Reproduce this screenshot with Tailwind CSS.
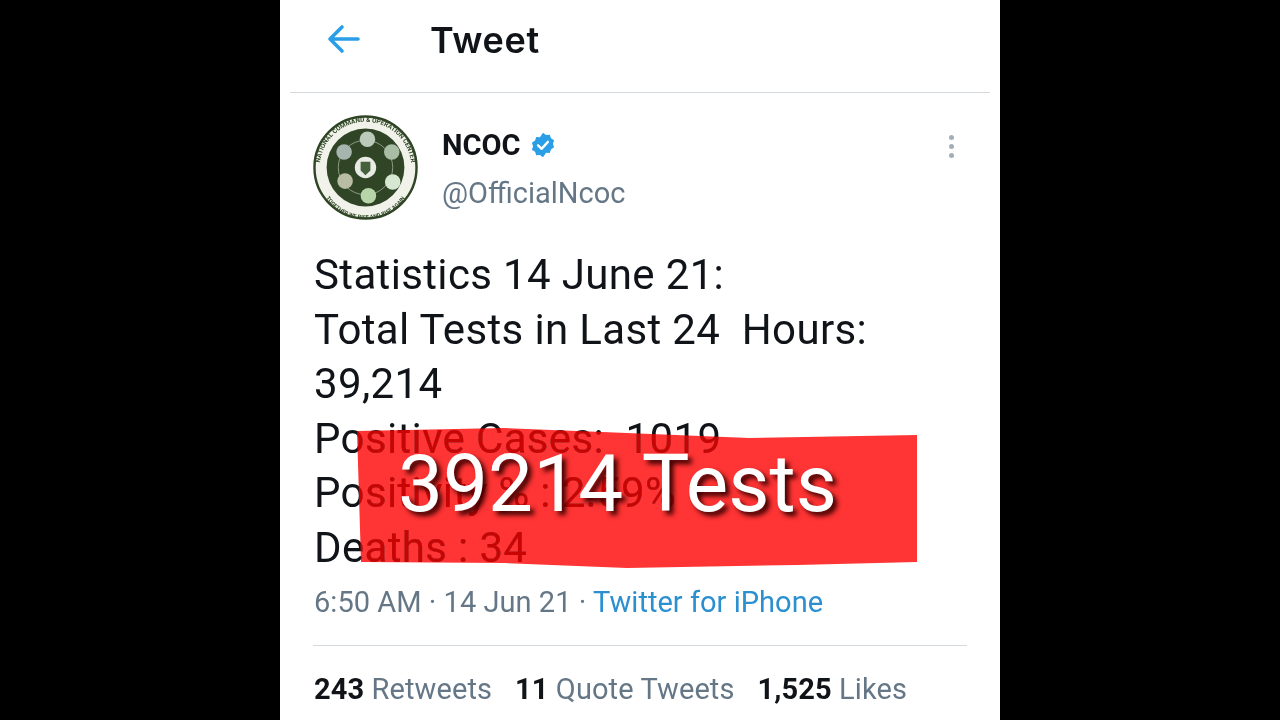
<!DOCTYPE html>
<html><head><script src="https://cdn.jsdelivr.net/npm/@tailwindcss/browser@4"></script></head>
<body class="m-0 bg-black">
<div class="w-[1280px] h-[720px] bg-black flex justify-center overflow-hidden font-['Roboto',sans-serif]">
<main class="relative w-[720px] h-[720px] bg-white overflow-hidden flex flex-col">
  <header class="h-[93px] mx-[10px] border-b border-[#d5dade] flex items-center shrink-0">
    <svg class="ml-[37px] mt-[-14px]" width="34" height="34" viewBox="0 0 34 34" fill="none" stroke="#2a9fe8" stroke-width="3.6" stroke-linecap="round" stroke-linejoin="round"><path d="M3 17H31M15 5L3 17L15 29"/></svg>
    <h1 class="ml-[69px] mt-[-12px] text-[36px] font-semibold leading-none tracking-[0.7px] text-[#101418] font-['Inter',sans-serif]">Tweet</h1>
  </header>
  <section class="px-[33px] pt-[22px] flex-1 flex flex-col">
    <div class="flex h-[107px]">
      <svg width="105" height="105" viewBox="0 0 108 108" class="shrink-0">
        <circle cx="54" cy="54" r="52.5" fill="#f1f3ea" stroke="#2f4526" stroke-width="2.5"/>
        <circle cx="54" cy="54" r="40" fill="#2f4526"/>
        <circle cx="54" cy="54" r="28" fill="none" stroke="#8f9c86" stroke-width="1"/>
        <circle cx="54" cy="54" r="11" fill="#e8ebe3"/>
        <path d="M49 48h10v9l-5 5-5-5z" fill="#44603d"/>
        <circle cx="56" cy="25" r="8" fill="#bccabb"/><circle cx="81" cy="38" r="8" fill="#a9bda4"/><circle cx="82" cy="69" r="8" fill="#d7e8d2"/>
        <circle cx="57" cy="83" r="8" fill="#b8d4a9"/><circle cx="33" cy="68" r="8" fill="#b8bda3"/><circle cx="32" cy="38" r="8" fill="#a6b6ae"/>
        <path id="arcTop" d="M7 54A47 47 0 0 1 101 54" fill="none"/>
        <text font-size="6.6" font-weight="700" fill="#2f4526" font-family="Roboto"><textPath href="#arcTop" startOffset="50%" text-anchor="middle">NATIONAL COMMAND &amp; OPERATION CENTER</textPath></text>
        <path id="arcBottom" d="M5 58A49 49 0 0 0 103 58" fill="none"/>
        <text font-size="5.6" font-weight="700" fill="#2f4526" font-family="Roboto"><textPath href="#arcBottom" startOffset="50%" text-anchor="middle">TOGETHER WE RISE AND RISE AGAIN</textPath></text>
      </svg>
      <div class="ml-[24px] flex-1 flex flex-col">
        <div class="flex items-center h-[24px] mt-[18px]">
          <span class="text-[29px] font-bold leading-none text-[#101418]">NCOC</span>
          <svg class="ml-[9px]" width="28" height="28" viewBox="0 0 24 24"><path fill="#2a9fe8" d="M12 1.5l2.6 1.9 3.2-.2 1 3 2.7 1.8-1 3 1 3-2.7 1.8-1 3-3.2-.2L12 22.5l-2.6-1.9-3.2.2-1-3-2.7-1.8 1-3-1-3 2.7-1.8 1-3 3.2.2z"/><path d="M7.8 12.3l3 3 5.4-6" fill="none" stroke="#fff" stroke-width="2" stroke-linecap="round" stroke-linejoin="round"/></svg>
        </div>
        <div class="mt-[18px] text-[29px] leading-[36px] text-[#657786]">@OfficialNcoc</div>
      </div>
      <div class="w-[32px] flex flex-col items-center gap-[4px] pt-[20px] shrink-0">
        <span class="w-[5px] h-[5px] rounded-full bg-[#a3aeb8]"></span><span class="w-[5px] h-[5px] rounded-full bg-[#a3aeb8]"></span><span class="w-[5px] h-[5px] rounded-full bg-[#a3aeb8]"></span>
      </div>
    </div>
    <div class="mt-[26px] pl-px text-[42px] leading-[54.5px] tracking-[0.35px] text-[#101418]">
      <p>Statistics 14 June 21:</p>
      <p class="whitespace-pre">Total Tests in Last 24  Hours:</p>
      <p>39,214</p>
      <p class="whitespace-pre">Positive Cases:  1019</p>
      <p>Positivity % : 2.59%</p>
      <p>Deaths : 34</p>
    </div>
    <div class="mt-[8px] pl-px text-[29px] leading-[38px] tracking-[0.03px] text-[#657786]">6:50 AM · 14 Jun 21 · <span class="text-[#2b8fd0]">Twitter for iPhone</span></div>
    <div class="mt-[24px] border-t border-[#d5dade]"></div>
    <div class="mt-[24px] pl-px flex gap-[24px] text-[29px] leading-[38px] tracking-[0.1px] text-[#657786]">
      <span><b class="text-[#101418]">243</b> Retweets</span><span class="-ml-px"><b class="text-[#101418]">11</b> Quote Tweets</span><span class="-ml-px"><b class="text-[#101418]">1,525</b> Likes</span>
    </div>
  </section>
  <div class="absolute left-[77px] top-[428px] w-[561px] h-[141px] bg-[#ff3434] mix-blend-multiply [clip-path:polygon(0px_3px,147px_0px,270px_5px,392px_10px,560px_7px,560px_134px,440px_137px,270px_140px,147px_135px,4px_134px)]"></div>
  <div class="absolute left-[77px] top-[428px] w-[561px] h-[141px] bg-[#c80000] mix-blend-lighten [clip-path:polygon(0px_3px,147px_0px,270px_5px,392px_10px,560px_7px,560px_134px,440px_137px,270px_140px,147px_135px,4px_134px)]"></div>
  <div class="absolute left-[118px] top-[441px] text-[80px] leading-[86px] tracking-[0.1px] text-white whitespace-nowrap [text-shadow:4px_4px_5px_#3a0000]">39214 Tests</div>
</main>
</div>
</body></html>
